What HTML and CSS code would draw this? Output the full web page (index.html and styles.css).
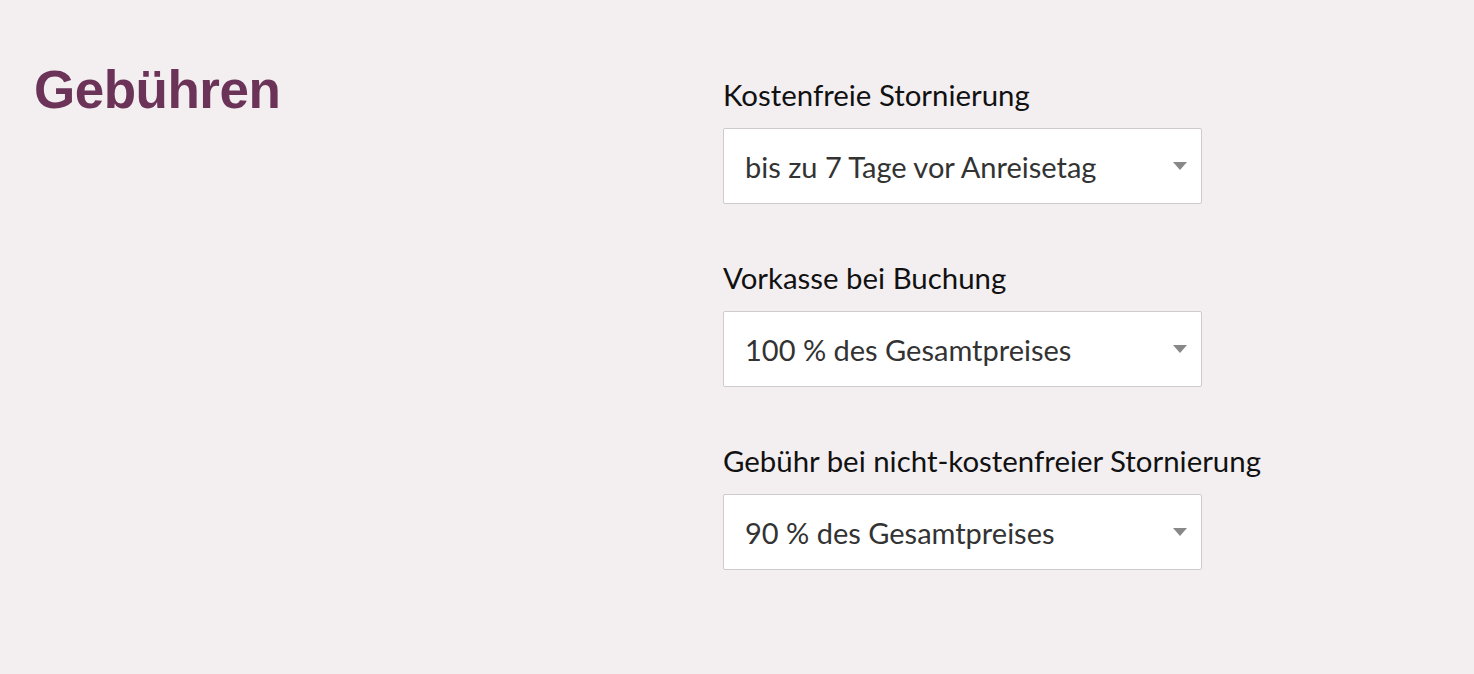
FILE: index.html
```html
<!DOCTYPE html>
<html lang="de">
<head>
  <meta charset="UTF-8">
  <title>Gebühren</title>
  <link rel="stylesheet" href="styles.css">
</head>
<body>
  <section class="fees">
    <h2 class="fees-title">Gebühren</h2>
    <div class="fees-fields">
      <div class="field">
        <label class="field-label">Kostenfreie Stornierung</label>
        <div class="select">
          <span class="select-value">bis zu 7 Tage vor Anreisetag</span>
          <span class="select-arrow"></span>
        </div>
      </div>
      <div class="field">
        <label class="field-label">Vorkasse bei Buchung</label>
        <div class="select">
          <span class="select-value">100 % des Gesamtpreises</span>
          <span class="select-arrow"></span>
        </div>
      </div>
      <div class="field">
        <label class="field-label">Gebühr bei nicht-kostenfreier Stornierung</label>
        <div class="select">
          <span class="select-value">90 % des Gesamtpreises</span>
          <span class="select-arrow"></span>
        </div>
      </div>
    </div>
  </section>
</body>
</html>
```

FILE: styles.css
```css
body {
  margin: 0;
  background: #f3eff1;
  font-family: Lato, sans-serif;
}
.fees {
  display: grid;
  grid-template-columns: 689px 479px;
  padding: 58px 0 0 34px;
}
.fees-title {
  margin: 0;
  font-family: "Liberation Sans", Arial, sans-serif;
  font-size: 53px;
  font-weight: bold;
  letter-spacing: -0.5px;
  line-height: 64px;
  color: #6b3358;
}
.fees-fields {
  display: flex;
  flex-direction: column;
  gap: 56px;
  padding-top: 19px;
}
.field {
  display: flex;
  flex-direction: column;
  gap: 15px;
}
.field-label {
  font-size: 29.4px;
  line-height: 36px;
  color: #111;
  white-space: nowrap;
}
.select {
  display: flex;
  align-items: center;
  justify-content: space-between;
  height: 74px;
  padding: 0 14px 0 21px;
  background: #fff;
  border: 1px solid #cfcacc;
  border-radius: 2px;
}
.select-value {
  font-size: 29px;
  color: #333;
}
.select-arrow {
  width: 0;
  height: 0;
  border-left: 7px solid transparent;
  border-right: 7px solid transparent;
  border-top: 8px solid #888;
}
```
